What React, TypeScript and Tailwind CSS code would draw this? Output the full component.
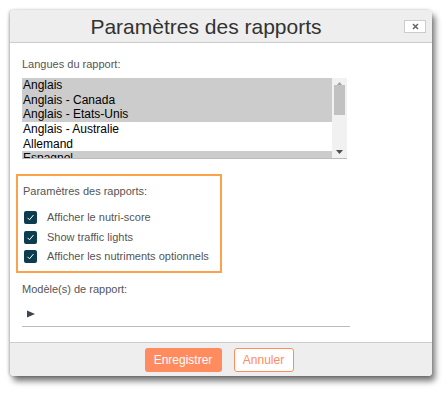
import React from 'react';

const langues = [
    { name: 'Anglais', selected: true },
    { name: 'Anglais - Canada', selected: true },
    { name: 'Anglais - Etats-Unis', selected: true },
    { name: 'Anglais - Australie', selected: false },
    { name: 'Allemand', selected: false },
    { name: 'Espagnol', selected: true },
];

const options = ['Afficher le nutri-score', 'Show traffic lights', 'Afficher les nutriments optionnels'];

function Check() {
    return (
        <span className="w-[13px] h-[13px] rounded-[2px] bg-[#0d3c4e] flex items-center justify-center shrink-0">
            <svg width="9" height="9" viewBox="0 0 9 9" fill="none">
                <path d="M1.5 4.8 L3.5 6.8 L7.5 2" stroke="white" strokeWidth="1" />
            </svg>
        </span>
    );
}

export default function App() {
    return (
        <div className="w-[448px] h-[398px] bg-white p-[10px] font-['Liberation_Sans',Arial,sans-serif]">
            <div className="w-[422px] h-[366px] bg-white rounded-[4px] flex flex-col overflow-hidden shadow-[3px_5px_6px_rgba(0,0,0,0.55),-1px_0_3px_rgba(0,0,0,0.25)]">

                {/* HEADER */}
                <div className="relative h-[33px] bg-[#eeeeee] border-b border-[#cccccc] flex items-center justify-center pr-[30px] shrink-0">
                    <h1 className="text-[21px] text-[#333333] leading-none">Paramètres des rapports</h1>
                    <button className="absolute right-[6px] top-[10px] w-[22px] h-[13px] bg-white border border-[#cccccc] flex items-center justify-center">
                        <svg width="7" height="7" viewBox="0 0 7 7">
                            <path d="M1 1 L6 6 M6 1 L1 6" stroke="#666" strokeWidth="1.6" />
                        </svg>
                    </button>
                </div>

                {/* BODY */}
                <div className="flex-1 px-[12px] pt-[15px]">
                    <p className="text-[11px] leading-[13px] text-[#555555]">Langues du rapport:</p>

                    <div className="mt-[7px] w-[325px] h-[81px] flex border-b border-[#bbbbbb] overflow-hidden">
                        <div className="flex-1 overflow-hidden">
                            {langues.map((l) => (
                                <div
                                    key={l.name}
                                    className={`h-[14.7px] leading-[14.7px] text-[12px] text-black pl-[1px] ${l.selected ? 'bg-[#cccccc]' : 'bg-white'}`}
                                >
                                    {l.name}
                                </div>
                            ))}
                        </div>
                        <div className="w-[15px] bg-[#f1f1f1] flex flex-col items-center justify-between py-[4px]">
                            <svg width="7" height="4" viewBox="0 0 7 4"><path d="M0 4 L3.5 0 L7 4 Z" fill="#a3a3a3" /></svg>
                            <div className="w-[11px] h-[30px] bg-[#c1c1c1] -mt-[1px] mb-auto" />
                            <svg width="7" height="4" viewBox="0 0 7 4"><path d="M0 0 L3.5 4 L7 0 Z" fill="#505050" /></svg>
                        </div>
                    </div>

                    <div className="mt-[15px] -ml-[6px] w-[206px] h-[99px] border-2 border-[#fba24a] pl-[5px] pt-[9px]">
                        <p className="text-[11px] leading-[13px] text-[#555555]">Paramètres des rapports:</p>
                        <div className="mt-[13px] flex flex-col gap-[6.5px] pl-[1px]">
                            {options.map((o) => (
                                <label key={o} className="flex items-center gap-[10px] text-[11px] leading-[13px] text-[#555555]">
                                    <Check />
                                    <span>{o}</span>
                                </label>
                            ))}
                        </div>
                    </div>

                    <p className="mt-[10px] text-[11px] leading-[13px] text-[#555555]">Modèle(s) de rapport:</p>
                    <div className="mt-[8px] w-[328px] h-[23px] border-b border-[#bbbbbb] flex items-center pl-[5px] pb-[3px]">
                        <svg width="8" height="8" viewBox="0 0 8 8"><path d="M0 0.5 L8 4 L0 7.5 Z" fill="#3d4450" /></svg>
                    </div>
                </div>

                {/* FOOTER */}
                <div className="h-[34px] bg-[#eeeeee] border-t border-[#cccccc] flex items-center justify-center gap-[12px] pr-[4px] shrink-0">
                    <button className="w-[77px] h-[24px] rounded-[3px] bg-[#ff8b5e] text-white text-[12px]">Enregistrer</button>
                    <button className="w-[60px] h-[24px] rounded-[3px] bg-white border border-[#ff8b5e] text-[#ff8b5e] text-[12px]">Annuler</button>
                </div>
            </div>
        </div>
    );
}
